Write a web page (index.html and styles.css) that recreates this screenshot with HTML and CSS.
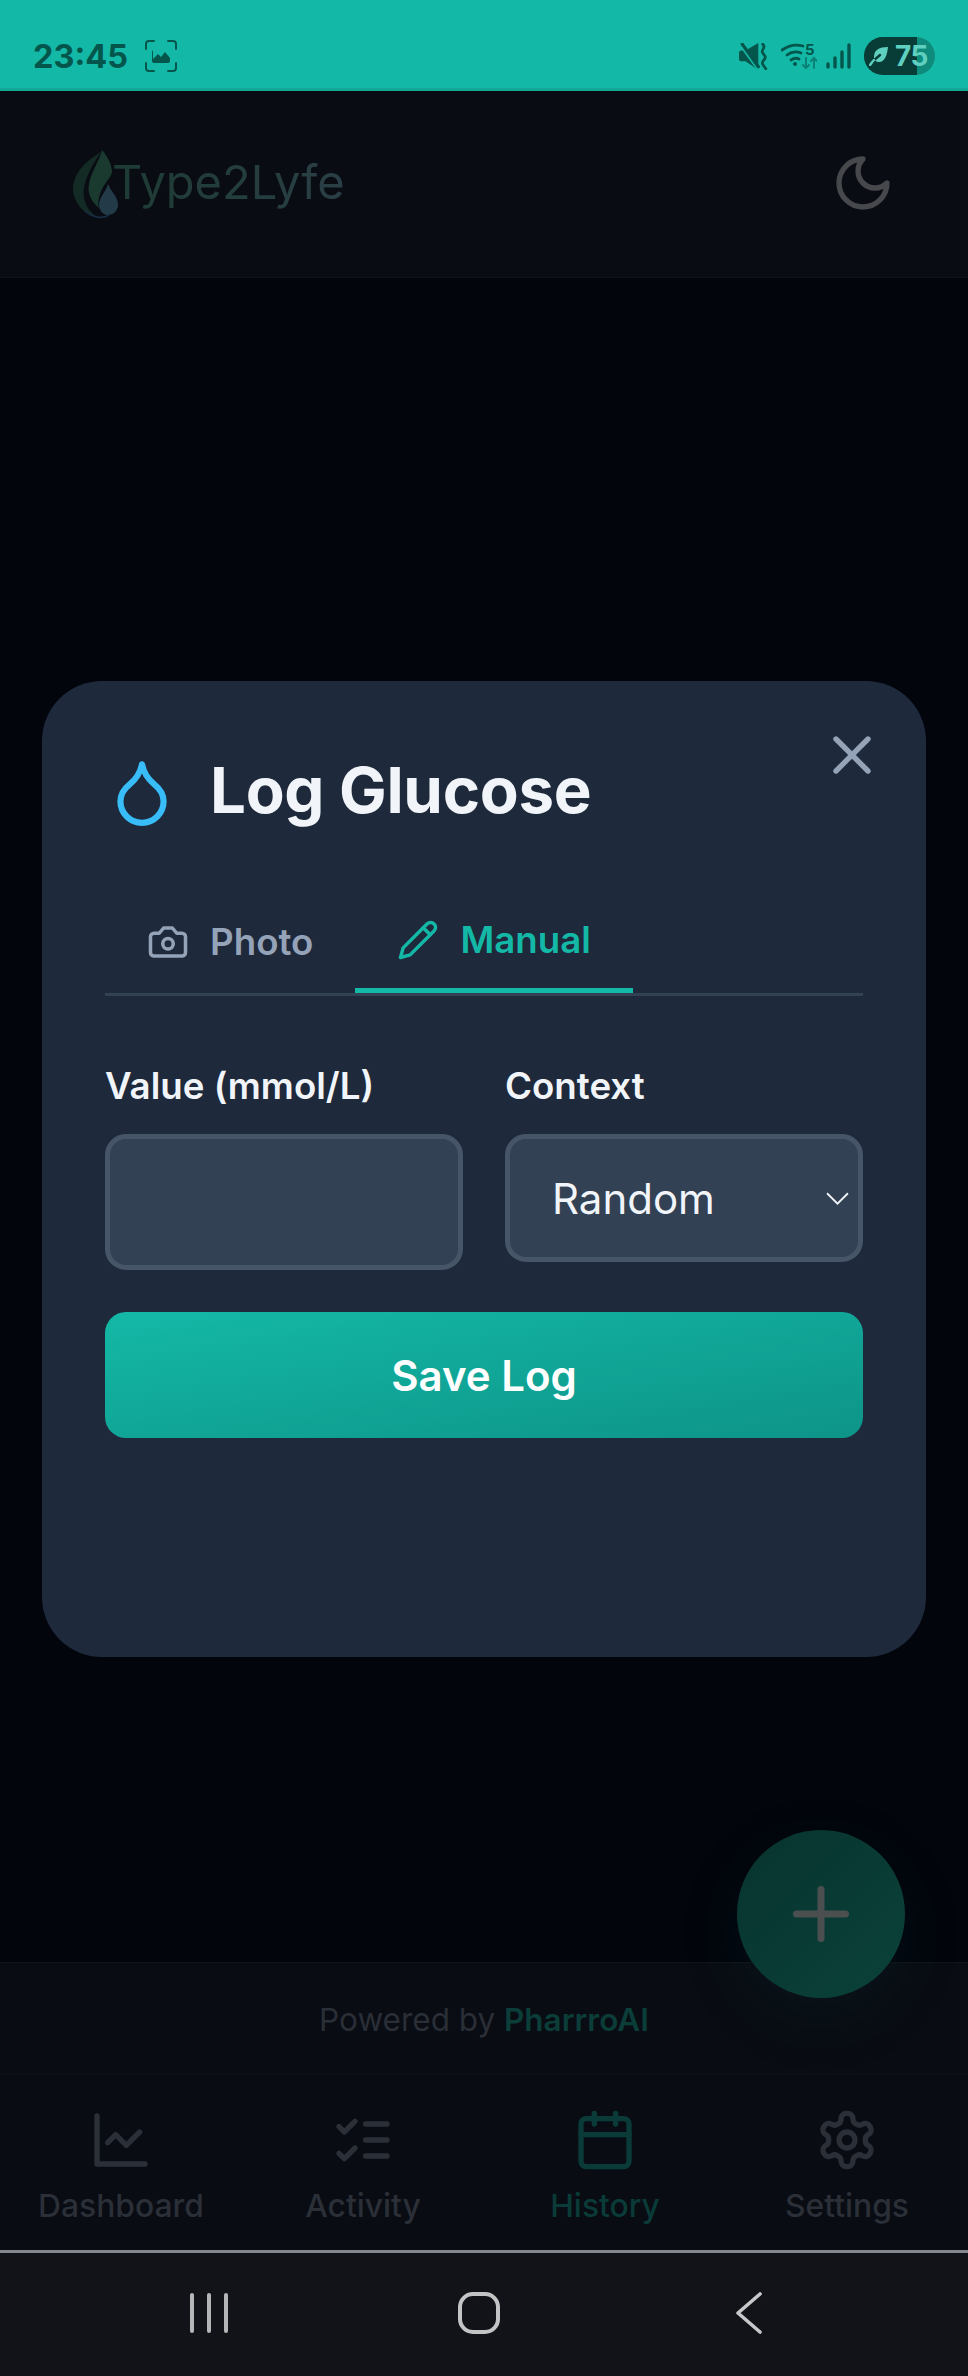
FILE: index.html
```html
<!DOCTYPE html>
<html lang="en">
<head>
  <meta charset="UTF-8" />
  <meta name="viewport" content="width=device-width, initial-scale=1.0"/>
  <title>Type2Lyfe - Log Glucose</title>
  <link rel="stylesheet" href="styles.css">
</head>
<body>
  <div class="screen">

    <div class="status-bar">
      <div class="status-left">
        <span class="status-time">23:45</span>
        <svg class="shot-icon" viewBox="0 0 32 32" fill="none" stroke="currentColor" stroke-width="2" stroke-linecap="round">
          <path d="M1 9V4a3 3 0 0 1 3-3h5M23 1h5a3 3 0 0 1 3 3v5M31 23v5a3 3 0 0 1-3 3h-5M9 31H4a3 3 0 0 1-3-3v-5"/>
          <path d="M9 10h14a2 2 0 0 1 2 2v9a2 2 0 0 1-2 2H9a2 2 0 0 1-2-2v-9a2 2 0 0 1 2-2z" fill="currentColor" stroke="none"/>
          <path d="M8 19l5-5 3 3 4-5 5 6v-8H8z" fill="#14b8a6" stroke="none"/>
        </svg>
      </div>
      <div class="status-right">
        <svg class="mute-icon" viewBox="0 0 27 25" fill="currentColor">
          <path d="M0 9a2 2 0 0 1 2-2h4L18 0v25L6 17H2a2 2 0 0 1-2-2z"/>
          <path d="M1 0l18 25" stroke="#14b8a6" stroke-width="4"/>
          <path d="M3 1l15 21" stroke="currentColor" stroke-width="3" stroke-linecap="round"/>
          <path d="M22 1c4 3-2 5 0 8s4 4 1 7 0 5 2 8" fill="none" stroke="currentColor" stroke-width="2.6" stroke-linecap="round"/>
        </svg>
        <div class="wifi">
          <svg class="wifi-icon" viewBox="0 0 36 26" fill="none" stroke="currentColor" stroke-width="2.8" stroke-linecap="round">
            <path d="M1 7c7-5 14-6 21-4"/>
            <path d="M6 12c4-3 9-4 14-2"/>
            <path d="M10 17c3-2 6-2 8-1"/>
            <circle cx="14" cy="21" r="2" fill="currentColor" stroke="none"/>
            <path class="wifi-down" d="M25 15v10M22 22l3 3 3-3"/>
            <path class="wifi-up" d="M33 25V15M30 18l3-3 3 3"/>
          </svg>
          <span class="wifi-num">5</span>
        </div>
        <svg class="signal-icon" viewBox="0 0 25 26" fill="none" stroke="currentColor" stroke-width="3.4" stroke-linecap="round">
          <path d="M2 24v-3M9 24v-9M16 24V9M23 24V2"/>
        </svg>
        <div class="battery">
          <div class="battery-fill"></div>
          <svg class="battery-leaf" viewBox="0 0 20 20" fill="none" stroke="currentColor" stroke-width="2.4" stroke-linecap="round">
            <path d="M19 1C10 1 5 4 5 11c0 3 2 5 5 5 6 0 8-7 9-15z" fill="currentColor" stroke="none"/>
            <path d="M1 19c3-4 6-7 10-10" stroke="#073d36"/>
            <path d="M1 19c1-1 2-3 4-5"/>
          </svg>
          <span class="battery-num">75</span>
        </div>
      </div>
    </div>

    <div class="app">
      <header class="app-header">
        <div class="brand">
          <svg class="brand-logo" viewBox="0 0 46 69">
            <path d="M28 2C14 10 1 22 0 38c0 14 10 26 24 29C14 60 9 50 11 38 13 26 20 14 28 2z" fill="#132a25"/>
            <path d="M29 0c5 6 10 14 10 22-1 6-9 12-12 22-2 6-2 11-1 14-7-6-12-14-10-24C18 22 26 12 29 0z" fill="#1b3a2f"/>
            <path d="M35 34c3 8 10 12 10 21 0 6-5 10-10 10s-9-5-9-10c0-8 7-13 9-21z" fill="#233a49"/>
            <path d="M12 61c8 7 18 8 24 4" fill="none" stroke="#1a2d45" stroke-width="1.6"/>
          </svg>
          <span class="brand-name">Type2Lyfe</span>
        </div>
        <svg class="icon moon-icon" viewBox="0 0 24 24"><path d="M12 3a6 6 0 0 0 9 9 9 9 0 1 1-9-9Z"/></svg>
      </header>

      <main class="app-main"></main>

      <footer class="powered">Powered by <strong>PharrroAI</strong></footer>

      <nav class="tabbar">
        <a class="tabbar-item">
          <svg class="icon" viewBox="0 0 24 24"><path d="M3 3v18h18"/><path d="m19 9-5 5-4-4-3 3"/></svg>
          <span>Dashboard</span>
        </a>
        <a class="tabbar-item">
          <svg class="icon" viewBox="0 0 24 24"><path d="m3 17 2 2 4-4"/><path d="m3 7 2 2 4-4"/><path d="M13 6h8"/><path d="M13 12h8"/><path d="M13 18h8"/></svg>
          <span>Activity</span>
        </a>
        <a class="tabbar-item current">
          <svg class="icon" viewBox="0 0 24 24"><rect x="3" y="4" width="18" height="18" rx="2"/><path d="M16 2v4"/><path d="M8 2v4"/><path d="M3 10h18"/></svg>
          <span>History</span>
        </a>
        <a class="tabbar-item">
          <svg class="icon" viewBox="0 0 24 24"><path d="M12.22 2h-.44a2 2 0 0 0-2 2v.18a2 2 0 0 1-1 1.73l-.43.25a2 2 0 0 1-2 0l-.15-.08a2 2 0 0 0-2.73.73l-.22.38a2 2 0 0 0 .73 2.73l.15.1a2 2 0 0 1 1 1.72v.51a2 2 0 0 1-1 1.74l-.15.09a2 2 0 0 0-.73 2.73l.22.38a2 2 0 0 0 2.73.73l.15-.08a2 2 0 0 1 2 0l.43.25a2 2 0 0 1 1 1.73V20a2 2 0 0 0 2 2h.44a2 2 0 0 0 2-2v-.18a2 2 0 0 1 1-1.73l.43-.25a2 2 0 0 1 2 0l.15.08a2 2 0 0 0 2.73-.73l.22-.39a2 2 0 0 0-.73-2.73l-.15-.08a2 2 0 0 1-1-1.74v-.5a2 2 0 0 1 1-1.74l.15-.09a2 2 0 0 0 .73-2.73l-.22-.38a2 2 0 0 0-2.73-.73l-.15.08a2 2 0 0 1-2 0l-.43-.25a2 2 0 0 1-1-1.73V4a2 2 0 0 0-2-2z"/><circle cx="12" cy="12" r="3"/></svg>
          <span>Settings</span>
        </a>
      </nav>

      <button class="fab" type="button">
        <svg class="icon" viewBox="0 0 24 24"><path d="M5 12h14"/><path d="M12 5v14"/></svg>
      </button>

      <!-- modal sits over the dimmed app -->
      <div class="overlay">
        <div class="modal">
          <button class="modal-close" type="button">
            <svg class="icon" viewBox="0 0 24 24"><path d="M18 6 6 18"/><path d="m6 6 12 12"/></svg>
          </button>

          <div class="modal-title">
            <svg class="icon drop-icon" viewBox="0 0 24 24"><path d="M12 22a7 7 0 0 0 7-7c0-2-1-3.9-3-5.5s-3.5-4-4-6.5c-.5 2.5-2 4.9-4 6.5C6 11.1 5 13 5 15a7 7 0 0 0 7 7z"/></svg>
            <h2>Log Glucose</h2>
          </div>

          <div class="tabs">
            <div class="tab">
              <svg class="icon" viewBox="0 0 24 24"><path d="M14.5 4h-5L7 7H4a2 2 0 0 0-2 2v9a2 2 0 0 0 2 2h16a2 2 0 0 0 2-2V9a2 2 0 0 0-2-2h-3l-2.5-3z"/><circle cx="12" cy="13" r="3"/></svg>
              <span>Photo</span>
            </div>
            <div class="tab active">
              <svg class="icon" viewBox="0 0 24 24"><path d="M17 3a2.85 2.83 0 1 1 4 4L7.5 20.5 2 22l1.5-5.5Z"/><path d="m15 5 4 4"/></svg>
              <span>Manual</span>
            </div>
          </div>

          <form class="log-form">
            <div class="form-row">
              <div class="field">
                <label for="value">Value (mmol/L)</label>
                <input id="value" type="number" step="0.1" />
              </div>
              <div class="field">
                <label for="context">Context</label>
                <div class="select-wrap">
                  <select id="context">
                    <option>Random</option>
                    <option>Fasting</option>
                    <option>After meal</option>
                  </select>
                  <svg class="select-arrow" viewBox="0 0 22 13"><path d="M1 1l10 10L21 1"/></svg>
                </div>
              </div>
            </div>
            <button class="save-btn" type="submit">Save Log</button>
          </form>
        </div>
      </div>
    </div>

    <div class="system-nav">
      <div class="sys-recent"><i></i><i></i><i></i></div>
      <div class="sys-home"></div>
      <svg class="sys-back" viewBox="0 0 26 42"><path d="M24 2 2 21l22 19"/></svg>
    </div>

  </div>
</body>
</html>
```

FILE: styles.css
```css
* {
  box-sizing: border-box;
  font-family: 'Inter', 'Liberation Sans', sans-serif;
}

body {
  margin: 0;
  background: #02050c;
}

.screen {
  height: 2376px;
  display: flex;
  flex-direction: column;
  overflow: hidden;
}

.icon {
  width: 64px;
  height: 64px;
  fill: none;
  stroke: currentColor;
  stroke-width: 2;
  stroke-linecap: round;
  stroke-linejoin: round;
  flex-shrink: 0;
}

/* status bar */
.status-bar {
  height: 91px;
  padding: 24px 33px 0 33px;
  display: flex;
  align-items: center;
  justify-content: space-between;
  background: #14b8a6;
  border-bottom: 3px solid #12a797;
  color: #04564d;
}

.status-left {
  display: flex;
  align-items: center;
  gap: 17px;
}

.status-time {
  font-size: 32.5px;
  font-weight: 700;
  line-height: 40px;
  position: relative;
  top: 1px;
}

.shot-icon {
  width: 32px;
  height: 32px;
}

.status-right {
  display: flex;
  align-items: center;
}

.mute-icon {
  width: 29px;
  height: 27px;
  margin-right: 13px;
}

.wifi {
  position: relative;
  width: 36px;
  height: 26px;
  margin-right: 9px;
}

.wifi-icon {
  width: 36px;
  height: 26px;
  display: block;
}

.wifi-down,
.wifi-up {
  stroke-width: 2;
  opacity: 0.55;
}

.wifi-num {
  position: absolute;
  top: -1px;
  left: 24px;
  font-size: 15px;
  font-weight: 700;
  line-height: 15px;
}

.signal-icon {
  width: 25px;
  height: 26px;
  margin-right: 13px;
}

.battery {
  position: relative;
  width: 71px;
  height: 38px;
  border-radius: 19px;
  background: #0e8b7d;
  overflow: hidden;
  color: #5fd0c0;
  display: flex;
  align-items: center;
  padding-left: 5px;
}

.battery-fill {
  position: absolute;
  left: 0;
  top: 0;
  bottom: 0;
  width: 53px;
  background: #073d36;
}

.battery-leaf {
  position: relative;
  width: 20px;
  height: 20px;
}

.battery-num {
  position: relative;
  margin-left: 6px;
  font-size: 28px;
  font-weight: 700;
  line-height: 38px;
  letter-spacing: -0.5px;
}

/* app underneath the modal, already dimmed */
.app {
  position: relative;
  flex: 1;
  display: flex;
  flex-direction: column;
  min-height: 0;
}

.app-header {
  height: 187px;
  padding: 0 73px 2px;
  display: flex;
  align-items: center;
  justify-content: space-between;
  background: #090c13;
  border-bottom: 1px solid #0e1118;
}

.brand {
  display: flex;
  align-items: center;
}

.brand-logo {
  width: 46px;
  height: 69px;
  margin-top: 2px;
}

.brand-name {
  margin: -3px 0 0 -7px;
  font-size: 47px;
  line-height: 56px;
  background: linear-gradient(90deg, #1d3b33, #2a3f46);
  -webkit-background-clip: text;
  background-clip: text;
  color: transparent;
}

.moon-icon {
  color: #46484c;
}

.app-main {
  flex: 1;
  background: #02050c;
}

.powered {
  height: 113px;
  padding-top: 2px;
  display: flex;
  align-items: center;
  justify-content: center;
  gap: 0.28em;
  background: #090c13;
  border-top: 1px solid #10131a;
  border-bottom: 1px solid #0e1118;
  font-size: 31.5px;
  color: #2a2e36;
}

.powered strong {
  font-weight: 600;
  color: #0b3d39;
}

.tabbar {
  height: 175px;
  padding-top: 33px;
  display: grid;
  grid-template-columns: repeat(4, 1fr);
  background: #090c13;
}

.tabbar-item {
  display: flex;
  flex-direction: column;
  align-items: center;
  gap: 14px;
  font-size: 31.8px;
  font-weight: 500;
  line-height: 40px;
  color: #2b2f37;
}

.tabbar-item.current {
  color: #0a3b38;
}

.fab {
  position: absolute;
  right: 63px;
  bottom: 252px;
  width: 168px;
  height: 168px;
  border: none;
  border-radius: 50%;
  padding: 0;
  display: flex;
  align-items: center;
  justify-content: center;
  background: linear-gradient(135deg, #08332e, #0a423a);
  box-shadow: 0 20px 60px rgba(14, 60, 55, 0.16);
  color: #4b4f50;
}

.fab .icon {
  width: 84px;
  height: 84px;
}

/* modal */
.overlay {
  position: absolute;
  inset: 0;
  padding: 0 42px 3px;
  display: flex;
  align-items: center;
}

.modal {
  position: relative;
  width: 100%;
  height: 976px;
  padding: 74px 63px 0;
  background: #1e293b;
  border-radius: 60px;
}

.modal-close {
  position: absolute;
  top: 42px;
  right: 42px;
  padding: 0;
  border: none;
  background: none;
  color: #94a3b8;
  display: block;
}

.modal-title {
  display: flex;
  align-items: center;
  gap: 31px;
  height: 74px;
  margin-bottom: 90px;
}

.drop-icon {
  width: 74px;
  height: 74px;
  color: #38bdf8;
}

.modal-title h2 {
  margin: -5px 0 0;
  font-size: 63.6px;
  font-weight: 700;
  line-height: 74px;
  letter-spacing: -0.3px;
  color: #f1f5f9;
}

.tabs {
  display: flex;
  align-items: flex-end;
  border-bottom: 3px solid #334155;
}

.tab {
  display: flex;
  align-items: center;
  gap: 21px;
  padding: 0 42px 25px;
  border-bottom: 5px solid transparent;
  font-size: 36.7px;
  font-weight: 600;
  line-height: 42px;
  color: #94a3b8;
}

.tab .icon {
  width: 42px;
  height: 42px;
}

.tab.active {
  padding-bottom: 27px;
  border-bottom-color: #14b8a6;
  color: #14b8a6;
}

.log-form {
  margin-top: 69px;
}

.form-row {
  display: grid;
  grid-template-columns: 1fr 1fr;
  gap: 42px;
  align-items: start;
}

label {
  display: block;
  margin-bottom: 27px;
  font-size: 36.7px;
  font-weight: 600;
  line-height: 42px;
  color: #f1f5f9;
}

input,
select {
  display: block;
  width: 100%;
  background: #334155;
  border: 5px solid #475569;
  border-radius: 21px;
  color: #f1f5f9;
  outline: none;
}

input {
  height: 136px;
  padding: 0 42px;
  font-size: 42px;
}

.select-wrap {
  position: relative;
}

select {
  height: 128px;
  padding: 0 42px;
  font-size: 42px;
  appearance: none;
  -webkit-appearance: none;
}

.select-arrow {
  position: absolute;
  right: 14px;
  top: 58px;
  width: 23px;
  height: 14px;
  fill: none;
  stroke: #f1f5f9;
  stroke-width: 1.7;
}

.save-btn {
  display: block;
  width: 100%;
  height: 126px;
  margin-top: 42px;
  border: none;
  border-radius: 21px;
  background: linear-gradient(to bottom right, #14b8a6, #0d9488);
  color: #ffffff;
  font-size: 42px;
  font-weight: 600;
}

/* android nav bar */
.system-nav {
  height: 126px;
  padding: 0 10px 3px 0;
  display: grid;
  grid-template-columns: repeat(3, 270px);
  justify-content: center;
  justify-items: center;
  align-items: center;
  background: #111318;
  border-top: 3px solid #85878e;
}

.sys-recent {
  display: flex;
  gap: 13px;
}

.sys-recent i {
  display: block;
  width: 4px;
  height: 40px;
  border-radius: 2px;
  background: #b5b5b8;
}

.sys-home {
  width: 42px;
  height: 42px;
  border: 4px solid #c4c4c6;
  border-radius: 15px;
}

.sys-back {
  width: 26px;
  height: 42px;
  fill: none;
  stroke: #c8c8ca;
  stroke-width: 3.6;
  stroke-linecap: round;
  stroke-linejoin: round;
}
```
